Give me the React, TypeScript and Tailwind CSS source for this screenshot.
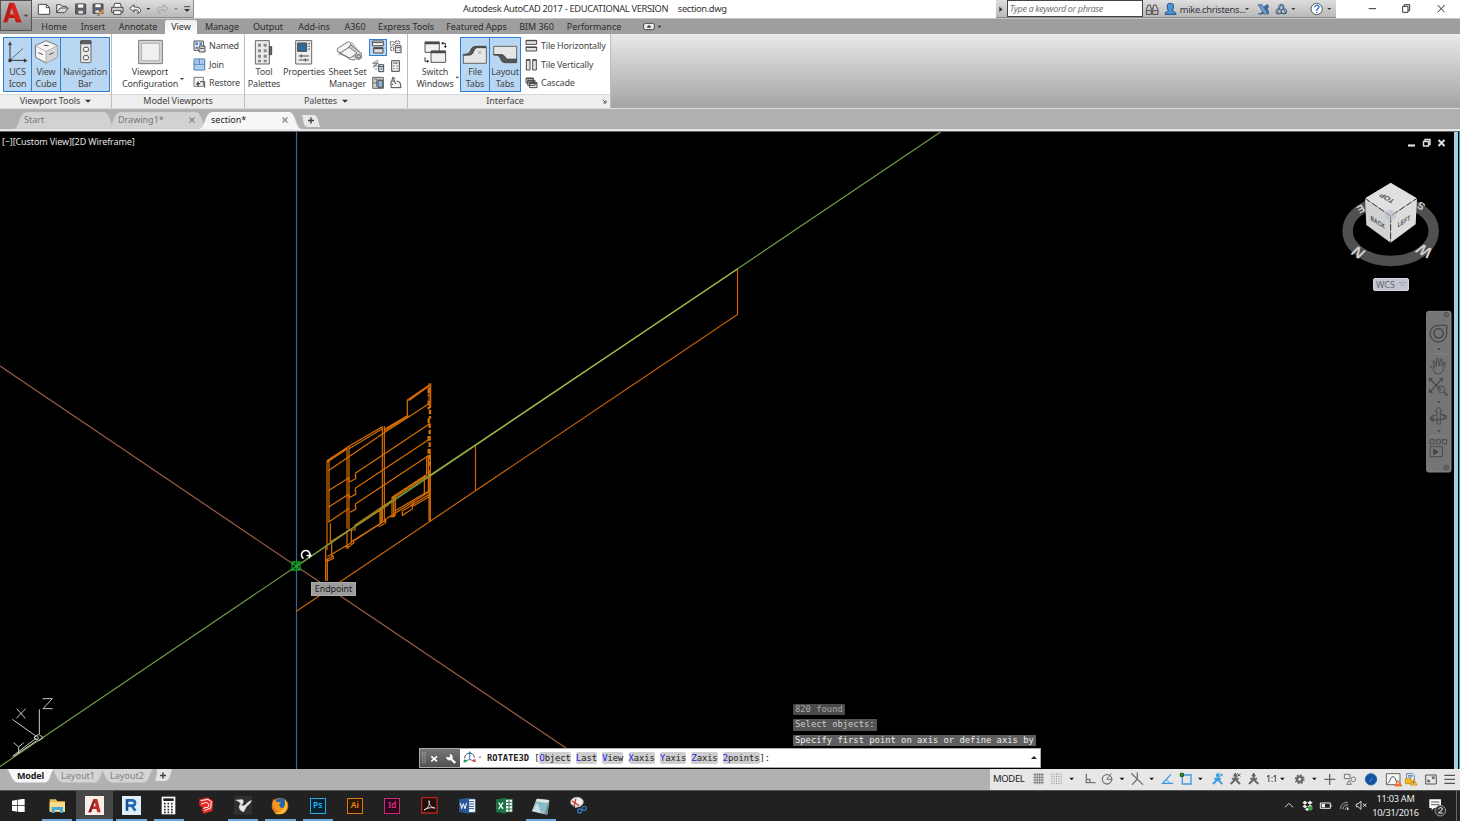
import React from 'react';

type GlyphProps = { box: string; children?: React.ReactNode; className?: string };

// Glyphs are drawn on a grid three times finer than the screen.
const Glyph: React.FC<GlyphProps> = ({ box, children, className = '' }) => {
  const [, , w, h] = box.split(' ').map(Number);
  return (
    <svg
      viewBox={box}
      width={w / 3}
      height={h / 3}
      className={`block shrink-0 ${className}`}
      fill="none"
      stroke="#4a4a4a"
      strokeWidth="3"
    >
      {children}
    </svg>
  );
};

const Caret: React.FC<{ box: string; x: number; y: number; r?: number; color?: string }> = ({ box, x, y, r = 6, color = '#333' }) => (
  <Glyph box={box}>
    <path d={`M${x - r} ${y - r / 2}h${r * 2}l${-r} ${r}z`} fill={color} stroke="none" />
  </Glyph>
);

const QuickAccess: React.FC = () => (
  <div className="flex h-[18px] w-[162px] border-b border-r border-[#8c8c8c] bg-linear-to-b from-[#dedede] to-[#b9b9b9]">
    <Glyph box="96 0 66 54">
      <path d="M115 13h24l10 10v20h-34z" fill="#fff" />
      <path d="M139 13v10h10" />
    </Glyph>
    <Glyph box="162 0 57 54">
      <path d="M170 38V14h12l4 5h12v6" fill="#eee" />
      <path d="M170 38l10-14h25l-11 14z" fill="#d8d8d8" />
    </Glyph>
    <Glyph box="219 0 48 54">
      <path d="M227 12h30v30h-30z" fill="#5c6470" />
      <path d="M233 12h18v12h-18z" fill="#fff" strokeWidth="2" />
      <path d="M234 31h16v11h-16z" fill="#ddd" strokeWidth="2" />
    </Glyph>
    <Glyph box="267 0 57 54">
      <path d="M279 12h30v28h-30z" fill="#5c6470" />
      <path d="M285 12h18v11h-18z" fill="#fff" strokeWidth="2" />
      <path d="M285 30h14v10h-14z" fill="#ddd" strokeWidth="2" />
      <path d="M297 44l14-14" stroke="#e79b3c" strokeWidth="6" />
      <path d="M293 48l5-6" />
    </Glyph>
    <Glyph box="324 0 57 54">
      <path d="M341 22l3-12h17l3 12" fill="#fff" />
      <path d="M335 22h34v15h-34z" fill="#ccc" />
      <path d="M341 32h22v11h-22z" fill="#fff" />
    </Glyph>
    <Glyph box="381 0 54 54">
      <path d="M389 25l13-11v7c13 0 20 4 20 10 0 5-4 8-10 9 3-3 4-5 3-7-2-3-6-4-13-4v7z" fill="#f4f4f4" />
    </Glyph>
    <Caret box="435 0 24 54" x={445} y={27} r={6} />
    <Glyph box="459 0 54 54">
      <path d="M504 25l-13-11v7c-13 0-20 4-20 10 0 5 4 8 10 9-3-3-4-5-3-7 2-3 6-4 13-4v7z" stroke="#a5a5a5" />
    </Glyph>
    <Caret box="513 0 30 54" x={528} y={27} r={6} color="#888" />
    <Glyph box="543 0 33 54">
      <path d="M552 20h18" />
      <path d="M552 27h18l-9 9z" fill="#333" stroke="none" />
    </Glyph>
  </div>
);

const TitleBar: React.FC = () => (
  <header className="relative flex h-[18px] bg-white pl-8">
    <div className="absolute left-0 top-0 z-10 h-[31px] w-8 border border-[#555] bg-linear-to-b from-[#b9b9b9] to-[#8a8a8a]">
      <svg viewBox="0 0 90 87" width="30" height="29">
        <path d="M7 64L25 5h15l22 59H45l-4-13H24l-4 13z" fill="#d8231f" />
        <path d="M32 20l6 20H27z" fill="#9f9f9f" />
        <path d="M25 5l8 10-16 49H7zM24 51l3-11 35 24H45l-4-13z" fill="#a91613" opacity="0.6" />
        <path d="M68 41h14l-7 7z" fill="#444" />
      </svg>
    </div>
    <QuickAccess />
    <div className="w-[269px]" />
    <div className="w-[215px] pt-[2px] text-[9.3px] leading-[13px] tracking-[-0.32px] text-[#333]">Autodesk AutoCAD 2017 - EDUCATIONAL VERSION</div>
    <div className="w-[318px] pt-[2px] text-[9.3px] leading-[13px] tracking-[-0.35px] text-[#333]">section.dwg</div>
    <div className="flex h-[18px] w-[340px] border-b border-[#8c8c8c] bg-linear-to-b from-[#dedede] to-[#b9b9b9]">
      <Glyph box="50 0 33 54">
        <path d="M60 20l10 8-10 8z" fill="#333" stroke="none" />
      </Glyph>
      <div className="h-[17px] w-[136px] border border-[#444] bg-white pl-[2px] text-[9px] italic leading-[15px] tracking-[-0.35px] text-[#777]">
        Type a keyword or phrase
      </div>
      <Glyph box="491 0 54 54">
        <path d="M501 43V29l5-14h7l3 14v14zM520 43V29l3-14h7l6 14v14zM516 25h5M501 32h14M521 32h14" />
      </Glyph>
      <Glyph box="545 0 54 54">
        <path d="M564 14c0-5 18-5 18 0v10c-1 5-4 8-4 8 4 2 11 3 12 11h-33c1-8 7-9 11-11 0 0-4-4-4-8z" fill="#4b95d6" stroke="#1c4f86" />
      </Glyph>
      <div className="w-[66px] pl-px pt-[3px] text-[9.3px] leading-[13px] tracking-[-0.3px] text-[#3b3040]">mike.christens...</div>
      <Caret box="797 0 27 54" x={803} y={27} r={6} />
      <Glyph box="824 0 54 54">
        <path d="M866 14c-12 2-13 8-14 14 0 7-5 12-15 14h11c7-1 10-4 12-8 2 4 3 7 7 8V32c-4-3-4-7 0-9z" fill="#3d6c9e" stroke="#30577f" strokeWidth="2" />
        <path d="M836 14h12l19 28h-12z" fill="#6f9fce" stroke="#30577f" strokeWidth="2" />
      </Glyph>
      <Glyph box="878 0 54 54">
        <circle cx="906" cy="21" r="8" fill="#ccd9e8" stroke="#42617f" />
        <circle cx="898" cy="34" r="8" stroke="#42617f" />
        <circle cx="914" cy="34" r="8" stroke="#42617f" />
        <path d="M906 14l14 26h-28z" stroke="#42617f" />
      </Glyph>
      <Caret box="932 0 51 54" x={942} y={27} r={6} />
      <Glyph box="983 0 54 54">
        <circle cx="1012" cy="27" r="17" fill="#fff" stroke="#555" />
        <path d="M1006 22c0-8 13-8 13-1 0 5-7 5-7 11M1012 35v4" stroke="#2877c9" strokeWidth="4" />
      </Glyph>
      <Caret box="1037 0 30 54" x={1050} y={27} r={6} />
    </div>
    <Glyph box="1067 0 373 54">
      <path d="M1165 26h22M1267 19h16v18h-16zM1272 19v-5h16v18h-5M1372 15l21 22M1393 15l-21 22" stroke="#333" />
    </Glyph>
  </header>
);

const menuTabs = [
  ['Home', 'w-[38px]'],
  ['Insert', 'w-[40px]'],
  ['Annotate', 'w-[50px]'],
  ['View', 'w-[32px] mx-[2px]'],
  ['Manage', 'w-[46px]'],
  ['Output', 'w-[46px]'],
  ['Add-ins', 'w-[46px]'],
  ['A360', 'w-[36px]'],
  ['Express Tools', 'w-[66px]'],
  ['Featured Apps', 'w-[75px]'],
  ['BIM 360', 'w-[45px]'],
  ['Performance', 'w-[70px]'],
];

const MenuTabs: React.FC = () => (
  <nav className="flex h-[16px] items-end border-t border-[#c4c4c4] bg-[#9e9e9e] pl-[35px] text-[9px] text-[#2c2c2c]">
    {menuTabs.map(([label, width]) => (
      <div
        key={label}
        className={`h-[14px] shrink-0 whitespace-nowrap text-center leading-[14px] ${width} ${
          label === 'View' ? 'rounded-t-[2px] bg-linear-to-b from-[#eee] to-white' : 'tracking-[-0.05px]'
        }`}
      >
        {label}
      </div>
    ))}
    <Glyph box="567 57 110 44">
      <rect x="611" y="70" width="32" height="19" rx="5" fill="#eee" />
      <path d="M622 82l5-6 5 6z" fill="#333" />
      <path d="M653 77h11l-5 6z" fill="#222" stroke="none" />
    </Glyph>
  </nav>
);

const BigButton: React.FC<{ lines: [string, string]; width: string; active?: boolean; children: React.ReactNode }> = ({ lines, width, active, children }) => (
  <button
    className={`flex h-[55px] shrink-0 flex-col items-center border text-[9px] leading-[11.5px] tracking-[-0.17px] text-[#454545] ${width} ${
      active ? 'border-[#2f80d0] bg-[#b9d6f2]' : 'border-transparent'
    }`}
  >
    <span className="flex h-[28px] items-center">{children}</span>
    <span className="whitespace-nowrap">{lines[0]}</span>
    <span className="whitespace-nowrap">{lines[1]}</span>
  </button>
);

const SmallRow: React.FC<{ label: string; children: React.ReactNode }> = ({ label, children }) => (
  <div className="flex h-[18.4px] items-center gap-[3px] whitespace-nowrap text-[9px] tracking-[-0.2px] text-[#454545]">
    {children}
    {label}
  </div>
);

const Panel: React.FC<{ title: string; width: string; caret?: boolean; launcher?: boolean; children: React.ReactNode }> = ({
  title,
  width,
  caret,
  launcher,
  children,
}) => (
  <section className={`flex h-[74px] shrink-0 flex-col border-r border-[#bdbdbd] bg-white ${width}`}>
    <div className="flex h-[60px] pt-[3px]">{children}</div>
    <div
      className={`relative flex h-[14px] items-center justify-center gap-[5px] border-t border-[#d9d9d9] bg-[#eeeeee] pb-px text-[9px] tracking-[-0.1px] text-[#444] ${
        launcher ? 'pr-[8px]' : ''
      }`}
    >
      {title}
      {caret && <Caret box="0 0 18 18" x={9} y={10} r={9} />}
      {launcher && (
        <svg viewBox="0 0 15 15" width="5" height="5" className="absolute right-[3px] top-[4px]" fill="none" stroke="#555" strokeWidth="3">
          <path d="M2 2l9 9M12 4v8H4" />
        </svg>
      )}
    </div>
  </section>
);

const Ribbon: React.FC = () => (
  <div className="flex h-[75px] border-b border-[#dcdcdc] bg-linear-to-b from-[#e9e9e9] to-[#a4a4a4]">
    <Panel title="Viewport Tools" width="w-[112px]" caret>
      <BigButton lines={['UCS', 'Icon']} width="ml-[3px] w-[29px]" active>
        <Glyph box="18 114 69 81">
          <path d="M30 125v53h46" stroke="#333" />
          <path d="M30 178l39-36" stroke="#333" strokeWidth="2" />
          <path d="M25 132l5-10 5 10zM72 173l10 6-10 5zM26 174h8v9h-8z" fill="#333" strokeWidth="1" />
        </Glyph>
      </BigButton>
      <BigButton lines={['View', 'Cube']} width="w-[30px] -ml-px" active>
        <Glyph box="102 116 75 76">
          <path d="M106 136l32-15 35 15-2 35-33 17-31-17z" fill="#f5f5f5" stroke="#777" />
          <path d="M138 153v35l33-17 2-35z" fill="#d5d5d5" stroke="none" />
          <path d="M106 136l32 17 35-17M138 153v35" stroke="#999" strokeWidth="2" />
          <path d="M115 157l14 6M147 163l14-6M132 135l14 1" stroke="#555" />
        </Glyph>
      </BigButton>
      <BigButton lines={['Navigation', 'Bar']} width="w-[50px] -ml-px" active>
        <Glyph box="225 116 57 76">
          <rect x="239" y="121" width="31" height="66" rx="2" fill="#e6e6e6" stroke="#666" />
          <path d="M239 122h31v8h-31z" fill="#666" />
          <rect x="248" y="141" width="14" height="12" rx="3" fill="#fff" />
          <rect x="248" y="166" width="14" height="12" rx="3" fill="#fff" />
        </Glyph>
      </BigButton>
    </Panel>

    <Panel title="Model Viewports" width="w-[133px]">
      <BigButton lines={['Viewport', 'Configuration']} width="w-[60px] ml-[8px]">
        <Glyph box="411 114 75 80">
          <path d="M413 118h71v70h-71z" fill="#d5d5d5" stroke="#777" />
          <path d="M422 127h53v52h-53z" fill="#f1f1f1" stroke="#999" strokeWidth="2" />
        </Glyph>
      </BigButton>
      <Caret box="540 111 21 250" x={546} y={237} r={6} />
      <div className="ml-[6px]">
        <SmallRow label="Named">
          <Glyph box="579 120 39 40">
            <path d="M582 123h28v28h-28z" fill="#fff" />
            <path d="M586 127h8v9h-8zM598 127h8v9h-8zM586 140h8v7h-8z" fill="#4d88c8" stroke="none" />
            <path d="M597 138h18v18h-18z" fill="#ddd" />
            <path d="M600 145h12" />
          </Glyph>
        </SmallRow>
        <SmallRow label="Join">
          <Glyph box="579 174 39 40">
            <path d="M582 177h32v33h-32z" fill="#bcd7f1" stroke="#417ab4" />
            <path d="M582 193h32M598 177v14" stroke="#417ab4" />
            <path d="M588 184h20v17h-20z" stroke="#76a5d1" strokeDasharray="4 3" />
          </Glyph>
        </SmallRow>
        <SmallRow label="Restore">
          <Glyph box="579 229 39 40">
            <path d="M582 233h28v27h-28z" fill="#f4f4f4" stroke="#777" />
            <path d="M588 253l8 8v-7h5v-4h-5v-7z" fill="#444" stroke="none" />
            <path d="M600 246h14v18" />
          </Glyph>
        </SmallRow>
      </div>
    </Panel>

    <Panel title="Palettes" width="w-[163px]" caret>
      <BigButton lines={['Tool', 'Palettes']} width="w-[36px] ml-[1px]">
        <Glyph box="762 114 60 80">
          <path d="M766 119h42v70h-42z" fill="#eaeaea" stroke="#666" />
          <path d="M808 137h7v24h-7z" fill="#666" />
          <path d="M774 128h9v9h-9zM791 128h9v9h-9zM774 145h9v9h-9zM791 145h9v9h-9zM774 161h9v9h-9zM791 161h9v9h-9zM774 176h9v8h-9zM791 176h9v8h-9z" fill="#888" stroke="none" />
        </Glyph>
      </BigButton>
      <BigButton lines={['Properties', '']} width="w-[44px]">
        <Glyph box="879 114 66 80">
          <path d="M887 119h48v70h-48z" fill="#eee" stroke="#666" />
          <path d="M893 126h27v25h-27z" fill="#356799" />
          <path d="M925 128h5M925 136h5M925 144h5M896 165h31M896 177h31M904 160v10M916 172v10" />
        </Glyph>
      </BigButton>
      <BigButton lines={['Sheet Set', 'Manager']} width="w-[43px]">
        <Glyph box="70 114 84 80">
          <path d="M80 161l34-34c4-5 12-5 16 1l22 32c3 8-2 15-9 15z" fill="#cfcfcf" stroke="none" />
          <path d="M80 151l36 22c4 3 9 4 18 3" stroke="#666" />
          <path d="M80 143l29-19c6-4 13 1 10 7l-4 8 24 17-21 16-38-21z" fill="#f4f4f4" stroke="#777" />
          <path d="M115 139l-28 18M119 131l31 24c7 8 3 20-6 20-8 1-13-7-9-14" stroke="#666" />
          <circle cx="144" cy="166" r="5" fill="#eee" />
        </Glyph>
      </BigButton>
      <div className="grid h-[55px] w-[36px] grid-cols-2 place-items-center">
        <div className="flex h-[17px] w-[18px] items-center justify-center border border-[#2f80d0] bg-[#b9d6f2]">
          <Glyph box="183 119 42 42">
            <path d="M187 122h33v14h-33zM189 127h29" fill="#fff" />
            <path d="M191 142h28v16h-28z" fill="#ddd" />
            <path d="M191 144h28" strokeWidth="5" />
          </Glyph>
        </div>
        <Glyph box="238 119 42 42">
          <path d="M242 124h11v10h-11zM258 122h12v8h-12zM243 140h9v10h-9z" strokeDasharray="4 2" />
          <path d="M257 136h17v21h-17z" fill="#eee" />
          <path d="M260 142h12M261 150h2M268 150h2" />
        </Glyph>
        <Glyph box="183 173 42 42">
          <path d="M204 176l-16 10h18M204 181l-14 13h14M194 203h8M190 199l12-12" strokeWidth="2" />
          <path d="M206 190h15v21h-15z" fill="#cfe1f3" />
          <path d="M206 196h15M211 203h6" />
        </Glyph>
        <Glyph box="238 173 42 42">
          <path d="M246 178h23v32h-23z" fill="#eee" />
          <path d="M251 185h13M251 194h3M261 194h3M251 202h3M261 202h3" />
        </Glyph>
        <Glyph box="183 228 42 42">
          <path d="M188 232h32v33h-32z" fill="#ccc" stroke="#666" />
          <path d="M192 237h8v24M206 237v24M212 237v24M188 249h15" strokeWidth="2" />
          <path d="M204 241h14v21h-14z" fill="#8bb7dd" />
        </Glyph>
        <Glyph box="238 228 42 42">
          <path d="M244 243v20h30l-3-16-10-4M244 243h10" fill="#f4f4f4" />
          <path d="M258 252l-7-16M247 241l2-9 8 4" />
          <path d="M246 253h4" />
        </Glyph>
      </div>
    </Panel>

    <Panel title="Interface" width="w-[203px]" launcher>
      <BigButton lines={['Switch', 'Windows']} width="w-[42px] ml-[6px]">
        <Glyph box="333 114 81 80">
          <path d="M342 123h43v31h-43zM360 150h44v34h-44z" fill="#f1f1f1" stroke="#555" />
          <path d="M342 126h43M360 153h44" strokeWidth="7" />
          <path d="M393 127h10v10M342 169v12h9" stroke="#333" />
          <path d="M390 127l7-5v10zM398 135h10l-5 7zM355 181l-7-5v10z" fill="#333" stroke="none" />
        </Glyph>
      </BigButton>
      <Caret box="435 111 9 250" x={439} y={233} r={5} />
      <BigButton lines={['File', 'Tabs']} width="w-[30px] ml-px" active>
        <Glyph box="453 114 84 80">
          <path d="M460 187v-24l21-2 14-22h34v48z" fill="#e6e6e6" stroke="#666" />
          <path d="M460 160c12 0 18-2 23-14 4-9 8-10 21-10h24v4h-27c-12 3-8 21-22 22h-19z" fill="#555" />
          <path d="M504 149l10 10M514 149l-10 10" stroke="#888" strokeWidth="2" />
        </Glyph>
      </BigButton>
      <BigButton lines={['Layout', 'Tabs']} width="w-[32px] -ml-px" active>
        <Glyph box="543 114 84 80">
          <path d="M551 136h69v39h-28l-14-13-27-2z" fill="#e6e6e6" stroke="#666" />
          <path d="M551 162c12 0 16 1 21 12 4 9 6 11 16 11h32v-10h-27c-7 0-7-14-18-14h-24z" fill="#555" />
        </Glyph>
      </BigButton>
      <div className="ml-[4px]">
        <SmallRow label="Tile Horizontally">
          <Glyph box="643 119 39 42">
            <path d="M646 123h32v12h-32zM646 143h32v12h-32z" fill="#e5e5e5" />
            <path d="M646 124h32M646 144h32" strokeWidth="4" />
          </Glyph>
        </SmallRow>
        <SmallRow label="Tile Vertically">
          <Glyph box="643 173 39 42">
            <path d="M647 178h11v31h-11zM666 178h11v31h-11z" fill="#e5e5e5" />
            <path d="M647 179h11M666 179h11" strokeWidth="4" />
          </Glyph>
        </SmallRow>
        <SmallRow label="Cascade">
          <Glyph box="643 228 39 42">
            <path d="M646 234h22v15h-22zM651 241h22v15h-22zM657 248h22v15h-22z" fill="#e5e5e5" />
            <path d="M646 236h22M651 243h22M657 250h22" strokeWidth="4" />
          </Glyph>
        </SmallRow>
      </div>
    </Panel>
  </div>
);

const FileTab: React.FC<{ label: string; w: number; className: string; active?: boolean; close?: boolean }> = ({ label, w, className, active, close }) => (
  <div className={`relative h-[17px] shrink-0 ${className}`}>
    <svg className="absolute inset-0" width={w} height="17" viewBox={`0 0 ${w} 17`}>
      <path
        d={`M0 17C6 16 4 1 13 0H${w - 12}C${w - 5} 1 ${w - 6} 16 ${w} 17z`}
        fill={active ? '#f6f6f6' : '#d2d2d2'}
        stroke={active ? '#ffffff' : '#c3c3c3'}
        strokeWidth="0.5"
      />
    </svg>
    <div className={`relative flex h-[17px] items-center justify-between pb-px pr-[13px] text-[9px] ${active ? 'text-[#222]' : 'text-[#777]'}`}>
      {label}
      {close && (
        <svg width="6" height="6" viewBox="0 0 6 6" stroke="#888" strokeWidth="1.3">
          <path d="M.5.5l5 5M5.500.5l-5 5" />
        </svg>
      )}
    </div>
  </div>
);

const FileTabs: React.FC = () => (
  <div className="flex h-[22px] items-end border-b-2 border-[#e6e6e6] bg-[#b0b0b0] pl-[14px]">
    <FileTab label="Start" w={102} className="w-[102px] pl-[10px]" />
    <FileTab label="Drawing1*" w={100} className="-ml-[8px] w-[100px] pl-[10px]" close />
    <FileTab label="section*" w={101} className="-ml-[8px] w-[101px] pl-[11px]" active close />
    <svg width="20" height="17" viewBox="0 0 20 17">
      <path d="M1 3H13C18 3 17 14 20 15H7C1 14 3 8 1 3z" fill="#e8e8e8" />
      <path d="M7 8.500h6M10 5.500v6" stroke="#444" strokeWidth="1.5" />
    </svg>
  </div>
);

const Section: React.FC = () => (
  <g transform="translate(280 370) scale(.33333)" stroke="#d86f02" strokeWidth="3.6">
    <path d="M141 272v268M147 270v186M141 272l61-40M141 277l61-41M201 232v245M207 230v250M201 232l106-62M207 236l100-60M307 170v285M313 168v285M313 178l69-41M382 141V90l66-45M386 92l64-46M386 137l-73 46" />
    <path d="M447 40v58M452 40v60" />
    <path d="M446 55v22M446 92v26M450 100v46M446 145v18M446 198v20M446 237v22M449 160v130" strokeWidth="7" strokeDasharray="14 5" />
    <path d="M145 302l162-110L449 100M145 362l62-39M145 412l62-40M145 457l62-42" />
    <path d="M226 310l222-148M226 355l222-147M226 402l219-145M226 310v10M226 355v10M226 402v10M210 335l17-9v-12M210 382l17-9v-12M210 427l17-9v-12M207 322v14M207 372v14" />
    <path d="M137 528l67-45M151 516l55-35M137 530v103M142 565v68M151 460v60M155 515v45M137 572l23-15M142 560l72-42M160 557v8l-20 10" />
    <path d="M201 480v50M214 480v40M197 530h10l14-11v-6l84-55M197 534h10M214 515l83-52M210 480h15v-15l112-75M225 470l100-66M300 418v45M304 416v45M297 463l20-12v7l-16 10h-8M313 450l137-86" />
    <path d="M336 382v58M341 380v60M346 378v58M336 382l104-68M336 387l104-68M330 440h12l4-5M433 325v50M445 255v108M451 250v203M447 300v153M440 258v55M346 422l105-62M400 408l51-30M390 408l60-36M367 423l30-18v12l-30 19zM400 395v13" />
    <path d="M346 377l95-63" strokeWidth="6" strokeDasharray="4 4" />
  </g>
);

const ViewCube: React.FC = () => (
  <g transform="translate(1320 130) scale(.33333)">
    <defs>
      <radialGradient id="cubeShadow">
        <stop offset="0.5" stopColor="#000" />
        <stop offset="1" stopColor="#000" stopOpacity="0" />
      </radialGradient>
    </defs>
    <ellipse cx="212" cy="303" rx="129" ry="90" stroke="#505050" strokeWidth="31" />
    <ellipse cx="212" cy="300" rx="100" ry="80" fill="url(#cubeShadow)" />
    <g fill="#d0d0d0" fontFamily="Liberation Sans, sans-serif" fontWeight="700" textAnchor="middle">
      <text transform="translate(103 379) rotate(32) skewX(-12)" fontSize="46">N</text>
      <text transform="translate(323 350) rotate(-152) skewX(-10)" fontSize="46">W</text>
      <text transform="translate(114 222) rotate(150)" fontSize="32" y="-6">E</text>
      <text transform="translate(308 220) rotate(-150)" fontSize="32" y="2">S</text>
    </g>
    <path d="M212 158l79 47-79 53-77-53z" fill="#e0e0e0" />
    <path d="M135 205l77 53v80l-73-53z" fill="#d2d2d2" />
    <path d="M291 205l-79 53v80l75-55z" fill="#dcdcdc" />
    <path d="M135 205l77 53 79-53M212 258v80" stroke="#333" strokeWidth="3" strokeDasharray="19 6" />
    <path d="M196 247l16-9 16 9v17l-16 9-16-9z" fill="#b9bfce" opacity=".65" />
    <g fill="#505050" fontFamily="Liberation Sans, sans-serif" fontWeight="700" textAnchor="middle">
      <text transform="matrix(-.83 -.5 .7 -.6 206 200)" fontSize="23">TOP</text>
      <text transform="matrix(.78 .5 0 1.1 173 284)" fontSize="19">BACK</text>
      <text transform="matrix(.78 -.5 0 1.1 252 281)" fontSize="19">LEFT</text>
    </g>
  </g>
);

const NavigationBar: React.FC = () => (
  <g transform="translate(1400 300) scale(.33333)" stroke="#4a4a4a" strokeWidth="3">
    <rect x="80" y="34" width="73" height="482" rx="6" fill="#757575" stroke="#858585" />
    <circle cx="139" cy="44" r="7" />
    <path d="M136 41l6 6M142 41l-6 6" />
    <path d="M116 76h24v26a25 25 0 1 1-24-26z" strokeWidth="4" />
    <circle cx="116" cy="100" r="14" strokeWidth="5" />
    <path d="M111 145h12l-6 6zM111 304h12l-6 6zM111 391h12l-6 6z" fill="#444" stroke="none" />
    <path d="M88 161h57M88 408h57" stroke="#8a8a8a" strokeWidth="2" />
    <path d="M106 221c-3-10-10-15-15-21 4-4 8 1 13 5l-5-22c5-3 7 3 10 16l1-24c6-3 7 3 7 23l6-21c6-1 4 8 2 23l9-15c5 1 1 10-3 20-3 9-6 11-8 16z" />
    <path d="M92 239l31 31M124 238l-32 36" strokeWidth="4" />
    <path d="M88 235h9l-9 9zM128 235h-9l9 9zM88 277v-9l9 9z" fill="#444" />
    <circle cx="124" cy="268" r="10" />
    <path d="M132 276l10 11" strokeWidth="5" />
    <path d="M111 372v-39h-6l11-11 11 11h-6v39z" />
    <path d="M107 346c-22 3-22 14 5 14M123 343c23 3 21 16-10 16M101 353l-8 6 8 6M129 348h10" strokeWidth="4" />
    <path d="M90 419h12v13H90zM109 419h12v13h-12zM128 419h12v13h-12zM90 440h37v30H90z" />
    <path d="M101 447v17l14-8z" fill="#444" />
    <circle cx="139" cy="503" r="7" />
    <path d="M135 503h8" />
  </g>
);

const Canvas: React.FC = () => (
  <main className="relative flex h-[638px] overflow-hidden border-t border-[#666] bg-black">
    <svg width="1454" height="637" viewBox="0 132 1454 637" fill="none" className="block shrink-0">
      <path d="M296.500 131V769" stroke="#3c6396" strokeWidth="1.2" />
      <path d="M0 366L296 566L566 748" stroke="#9a5c45" strokeWidth="1.2" />
      <path d="M0 766.500L296 566.500L942 131" stroke="#6d9c3f" strokeWidth="1.2" />
      <path d="M296 611.500L737.500 314.500V269M475.500 445V491" stroke="#c96408" strokeWidth="1.2" />
      <Section />
      <path d="M296 566.500L429 476" stroke="#6d9c3f" strokeWidth="1.2" />
      <path d="M429 476L737.500 269" stroke="#a5b643" strokeWidth="1.2" />
      <path d="M292 562h8v8h-8zM292 562l8 8M300 562l-8 8" stroke="#00a91c" strokeWidth="1.3" />
      <path d="M303.500 558.500a4.300 4.300 0 1 1 5.200-.5M306.500 555.500h5" stroke="#fff" strokeWidth="1.6" />
      <g transform="translate(0 690) scale(.33333)" stroke="#c9c9c9" strokeWidth="3">
        <path d="M118 58v75M106 137L37 88M104 148L37 199M110 152l-69 47M128 26h29l-28 30h29M50 56l26 29M77 56L49 85M41 158l15 13 15-13M56 171v20M103 142l13-9 14 10-14 9z" />
        <circle cx="109" cy="143" r="6" />
      </g>
      <path d="M1408 145.500h7" stroke="#ddd" strokeWidth="2.200" />
      <path d="M1423.500 141.500h5v4.500h-5zM1425 141v-1.500h5v5h-1.500" stroke="#ddd" strokeWidth="1.4" />
      <path d="M1438.500 140l6 6M1444.500 140l-6 6" stroke="#ddd" strokeWidth="2" />
      <ViewCube />
      <NavigationBar />
    </svg>
    <div className="w-[4px] shrink-0 bg-[#aecbe4]" />
    <div className="ml-px w-px shrink-0 bg-[#19b3cf]" />

    <div className="absolute left-[2px] top-[3px] text-[9px] leading-[13px] tracking-[-0.12px] text-[#e2e2e2]">[−][Custom View][2D Wireframe]</div>
    <div className="absolute left-[1373px] top-[146px] flex h-[13px] w-[36px] items-center gap-[4px] rounded-[2px] border border-[#d5d8e2] bg-[#c2c5d0] pl-[2px] text-[9px] text-[#666]">
      WCS
      <svg width="7" height="5" viewBox="0 0 7 5" fill="none" stroke="#a2a6b2">
        <path d="M.5.5h6L3.500 4z" />
      </svg>
    </div>
    <div className="absolute left-[311px] top-[450px] h-[14px] w-[45px] border border-[#aaa] bg-[#9c9c9c] text-center text-[9px] leading-[12px] tracking-[-0.1px] text-[#222]">Endpoint</div>
    <CommandLine />
  </main>
);

const options = ['Object', 'Last', 'View', 'Xaxis', 'Yaxis', 'Zaxis', '2points'];

const CommandLine: React.FC = () => (
  <div className="absolute bottom-[1px] left-[419px] w-[622px] font-['DejaVu_Sans_Mono','Liberation_Mono',monospace] text-[8.82px]">
    <div className="flex flex-col items-start gap-[4px] pb-[2px] pl-[374px] leading-[11.300px] text-[#ddd]">
      <div className="rounded-[1px] bg-[#4a4a4a] px-[2px] text-[#aaa]">820 found</div>
      <div className="rounded-[1px] bg-[#545454] px-[2px] text-[#ccc]">Select objects:</div>
      <div className="whitespace-nowrap rounded-[1px] bg-[#5f5f5f] px-[2px] text-[#eee]">Specify first point on axis or define axis by</div>
    </div>
    <div className="flex h-[20px] items-center border border-[#aaa] bg-white text-[#222]">
      <Glyph box="330 25 120 56" className="bg-linear-to-b from-[#777] to-[#505050]">
        <path d="M338 35v36M345 35v36" stroke="#aaa" strokeDasharray="3 3" strokeWidth="4" />
        <path d="M364 47l17 15M381 47l-17 15" stroke="#fff" strokeWidth="5" />
        <path d="M418 50l18 17" stroke="#fff" strokeWidth="7" />
        <path d="M410 50c0 7 8 10 14 6 5-5 3-13-3-15l1 9-5 2z" fill="#fff" stroke="#fff" />
      </Glyph>
      <Glyph box="450 27 75 54">
        <path d="M479 38v20l-13 6M479 58l14 6" stroke="#367db5" />
        <path d="M464 55c0-20 29-20 29-2" stroke="#444" />
        <path d="M474 42l5-9 5 9z" fill="#2b79b9" stroke="none" />
        <path d="M461 59h8v8h-8z" fill="#289b49" stroke="none" />
        <path d="M489 58h8v8h-8z" fill="#e04739" stroke="none" />
        <path d="M505 50h10l-5 5z" fill="#777" stroke="none" />
      </Glyph>
      <div className="ml-[2px] flex-1 whitespace-pre leading-[12px] tracking-[-0.07px]">
        <b>ROTATE3D</b> [
        {options.map((option, i) => (
          <React.Fragment key={option}>
            {i > 0 && ' '}
            <span className="rounded-[2px] bg-[#cfcfcf] py-px">
              <span className="text-[#2222e8]">{option[0]}</span>
              {option.slice(1)}
            </span>
          </React.Fragment>
        ))}
        ]:
      </div>
      <svg width="12" height="6" viewBox="0 0 12 6">
        <path d="M3 4l3-3 3 3z" fill="#222" />
      </svg>
    </div>
  </div>
);

const LayoutTab: React.FC<{ label: string; w: number; className: string; active?: boolean }> = ({ label, w, className, active }) => (
  <div className={`relative h-[14px] shrink-0 text-center text-[9px] leading-[13px] ${className} ${active ? 'font-bold tracking-[-0.2px] text-[#222]' : 'text-[#808080]'}`}>
    <svg className="absolute inset-0" width={w} height="14" viewBox={`0 0 ${w} 14`}>
      <path d={`M0 0H${w}C${w - 4} 3 ${w - 3} 13 ${w - 9} 13.500H11C4 13 4 3 0 0z`} fill={active ? '#f7f7f7' : '#d4d4d4'} />
    </svg>
    <span className="relative">{label}</span>
  </div>
);

const Runner: React.FC<{ box: string; x: number; color: string; spark?: boolean }> = ({ box, x, color, spark }) => (
  <Glyph box={box}>
    <path d={`M${x} 42v16l-14 14M${x} 58l14 14M${x - 10} 55l10 4 10-4`} stroke={color} strokeWidth="6" />
    <path d={`M${x - 5} 48l5-9 5 9z`} fill={color} stroke={color} />
    {spark && <path d={`M${x + 5} 39l10 10M${x + 3} 51l13-9`} stroke={color} />}
  </Glyph>
);

const StatusBar: React.FC = () => (
  <div className="flex h-[21px] bg-[#b1b1b1]">
    <div className="flex w-[990px] pl-[7px]">
      <LayoutTab label="Model" w={47} className="w-[47px]" active />
      <LayoutTab label="Layout1" w={52} className="-ml-[2px] w-[52px]" />
      <LayoutTab label="Layout2" w={52} className="-ml-[3px] w-[52px]" />
      <svg width="20" height="14" viewBox="0 0 20 14">
        <path d="M4 0h15c-2 4-1 12-8 12H3C1 10 5 6 4 0z" fill="#e4e4e4" />
        <path d="M7 6.500h6M10 3.500v6" stroke="#444" strokeWidth="1.500" />
      </svg>
    </div>
    <div className="flex h-[21px] w-[470px] bg-[#e7e7e7]">
      <div className="w-[40px] pl-[3px] text-[9.500px] leading-[20px] tracking-[-0.35px] text-[#222]">MODEL</div>
      <Glyph box="150 27 51 63">
        <path d="M165 39v34M172 39v34M179 39v34M186 39v34M160 44h32M160 52h32M160 60h32M160 68h32" stroke="#777" strokeWidth="2.500" />
      </Glyph>
      <Glyph box="201 27 57 63">
        <path d="M214 42h32M214 49h32M214 56h32M214 63h32M214 70h32" stroke="#888" strokeDasharray="3 4" />
      </Glyph>
      <Caret box="258 27 42 63" x={275} y={57} r={7} color="#111" />
      <Glyph box="300 27 54 63">
        <path d="M319 41v27h28M319 58h11v10" stroke="#777" strokeWidth="4" />
      </Glyph>
      <Glyph box="354 27 54 63">
        <circle cx="381" cy="58" r="14" stroke="#777" strokeWidth="4" />
        <path d="M398 58h-18l14-18" stroke="#777" />
      </Glyph>
      <Caret box="408 27 36 63" x={426} y={57} r={7} color="#111" />
      <Glyph box="444 27 54 63">
        <path d="M454 40l35 34M472 37v21l-16 16" stroke="#777" strokeWidth="4" />
      </Glyph>
      <Caret box="498 27 33 63" x={515} y={57} r={7} color="#111" />
      <Glyph box="531 27 63 63">
        <path d="M573 43l-25 27h32" stroke="#3b9be0" strokeWidth="4" />
        <path d="M559 61c7 0 8 6 8 9" stroke="#3b9be0" />
      </Glyph>
      <Glyph box="594 27 51 63">
        <path d="M607 45h26v27h-26z" stroke="#3b9be0" strokeWidth="4" />
        <path d="M601 40h9v9h-9z" fill="#22b322" stroke="#174317" />
      </Glyph>
      <Caret box="645 27 33 63" x={661} y={57} r={7} color="#111" />
      <Runner box="678 27 60 63" x={713} color="#3b9be0" spark />
      <Runner box="738 27 54 63" x={766} color="#666" spark />
      <Runner box="792 27 60 63" x={821} color="#666" />
      <div className="w-[15px] pl-[2px] text-[9px] leading-[20px] tracking-[-0.5px] text-[#222]">1:1</div>
      <Caret box="897 27 33 63" x={907} y={57} r={7} color="#111" />
      <Glyph box="930 27 57 63">
        <circle cx="959" cy="58" r="8" stroke="#666" strokeWidth="7" />
        <circle cx="959" cy="58" r="13" stroke="#666" strokeWidth="4" strokeDasharray="5 5.200" />
      </Glyph>
      <Caret box="987 27 33 63" x={1003} y={57} r={7} color="#111" />
      <Glyph box="1020 27 60 63">
        <path d="M1033 58h33M1049 42v33" stroke="#666" strokeWidth="4" />
      </Glyph>
      <Glyph box="1080 27 60 63">
        <path d="M1093 43h17v13h-17zM1100 73l7-12 7 12z" stroke="#777" />
        <circle cx="1120" cy="58" r="7" stroke="#777" />
      </Glyph>
      <Glyph box="1140 27 63 63">
        <circle cx="1173" cy="58" r="17" fill="#10549f" stroke="#28679d" />
        <path d="M1168 65l10-10" stroke="#3978b5" strokeWidth="4" />
      </Glyph>
      <Glyph box="1203 27 63 63">
        <path d="M1219 41h41v33h-41z" fill="#f6f6f6" stroke="#666" />
        <path d="M1222 70c8 0 8-20 17-20s8 20 17 20" stroke="#555" />
        <path d="M1254 61l12 17h-22z" fill="#e8773a" stroke="#e8773a" />
        <path d="M1254 66v6" stroke="#fff" />
      </Glyph>
      <Glyph box="1266 27 54 63">
        <path d="M1280 41h17l6 6v22h-23z" fill="#fff" stroke="#4a78ad" />
        <path d="M1284 47h14M1284 51h14" stroke="#4a78ad" />
        <path d="M1276 56h18v15h-18z" fill="#f1ba28" stroke="#d19a20" />
        <path d="M1301 58l10 17h-20z" fill="#ffd33a" stroke="#cc9722" />
        <path d="M1301 64v7" />
      </Glyph>
      <Glyph box="1320 27 63 63">
        <path d="M1337 45h32v27h-32z" stroke="#555" />
        <path d="M1343 66v-8l8 8zM1363 50v8l-8-8z" fill="#555" stroke="#555" strokeWidth="1" />
        <path d="M1343 66l7-7M1363 50l-7 7" stroke="#555" />
      </Glyph>
      <Glyph box="1383 27 57 63">
        <path d="M1393 46h32M1393 58h32M1393 70h32" stroke="#555" strokeWidth="4" />
      </Glyph>
    </div>
  </div>
);

const TaskItem: React.FC<{ open?: boolean; active?: boolean; children: React.ReactNode }> = ({ open, active, children }) => (
  <div className={`relative flex h-[30px] w-[37.25px] shrink-0 items-center justify-center pb-px ${active ? 'bg-[#474747]' : ''}`}>
    {children}
    {open && <span className={`absolute bottom-0 h-[2px] bg-[#6fa9dc] ${active ? 'inset-x-0' : 'inset-x-[3.500px]'}`} />}
  </div>
);

const AdobeIcon: React.FC<{ label: string; className: string }> = ({ label, className }) => (
  <div className={`flex h-[16px] w-[16px] items-center justify-center border-[1.500px] text-[8.500px] font-semibold ${className}`}>{label}</div>
);

const Taskbar: React.FC = () => (
  <footer className="flex h-[31px] border-t border-[#555] bg-[#212121] pl-px">
    <TaskItem>
      <Glyph box="36 328 39 40" className="-ml-[2px]">
        <path d="M36 333l16-3v17H36zM54 330l20-3v20H54zM36 349h16v17l-16-3zM54 349h20v20l-20-3z" fill="#fff" stroke="none" />
      </Glyph>
    </TaskItem>
    <TaskItem open>
      <Glyph box="146 324 50 46">
        <path d="M148 328h19l4 6h23v31h-46z" fill="#e8bf55" stroke="none" />
        <path d="M148 337h46v28h-46z" fill="#fbdf88" stroke="none" />
        <path d="M154 369v-18h34v18h-9v-9h-16v9z" fill="#46a8df" stroke="none" />
      </Glyph>
    </TaskItem>
    <TaskItem open active>
      <Glyph box="254 318 57 57">
        <path d="M254 318h57v57h-57z" fill="#f8eee7" stroke="none" />
        <path d="M264 367l16-40h11l10 40h-10l-3-10h-12l-3 10z" fill="#c52b26" stroke="none" />
        <path d="M283 335l3 14h-8z" fill="#f8eee7" stroke="none" />
        <path d="M264 367l16-40 4 8-12 32z" fill="#842020" stroke="none" />
      </Glyph>
    </TaskItem>
    <TaskItem open>
      <Glyph box="367 318 57 57">
        <path d="M367 318h57v57h-57z" fill="#dfedf7" stroke="none" />
        <path d="M382 362v-31h15c12 0 12 16 0 16h-14M396 347l11 15" stroke="#2268ad" strokeWidth="8" />
        <path d="M382 362v-31" stroke="#184881" strokeWidth="5" />
      </Glyph>
    </TaskItem>
    <TaskItem open>
      <Glyph box="484 319 45 56">
        <path d="M486 321h41v53h-41z" fill="#fff" stroke="none" />
        <path d="M491 326h31v8h-31z" fill="#222" stroke="none" />
        <path d="M493 342h28M493 351h28M493 360h28M493 368h28" stroke="#333" strokeWidth="5" strokeDasharray="5 5.500" />
      </Glyph>
    </TaskItem>
    <TaskItem>
      <Glyph box="594 321 50 50">
        <path d="M598 328l25-6 17 11-3 30-26 8-7-13 6-4-12-7z" fill="#e52b26" stroke="none" />
        <path d="M602 332l22-4 10 7-2 19-19 8M604 342l15-5 8 6-2 8-16 4" stroke="#fff" strokeWidth="3" />
      </Glyph>
    </TaskItem>
    <TaskItem open>
      <Glyph box="702 320 56 56">
        <path d="M702 320h56v56h-56z" fill="#303030" stroke="none" />
        <path d="M706 332l20-2c6 2 6 8 2 14l-3 4c4 2 9 0 13-4 6-6 11-9 18-11-4 9-9 13-15 18-4 4-6 13-10 17-7-2-12-6-14-13-1-4 1-8 5-12l-6-6z" fill="#e8e8e8" stroke="#888" strokeWidth="1" />
      </Glyph>
    </TaskItem>
    <TaskItem open>
      <Glyph box="814 320 54 54">
        <circle cx="841" cy="347" r="25" fill="#e97817" stroke="none" />
        <circle cx="843" cy="341" r="18" fill="#2762ad" stroke="none" />
        <path d="M820 326l12 9 12 1-6 8 5 8 17 1-9 10c-22 6-35-13-31-37z" fill="#f59721" stroke="none" />
        <path d="M855 327c12 11 9 30 0 38-8 8-23 9-31 2 18 2 37-13 31-40z" fill="#f8bf31" stroke="none" />
      </Glyph>
    </TaskItem>
    <TaskItem open>
      <AdobeIcon label="Ps" className="border-[#26a9df] bg-[#052231] text-[#26b3ed]" />
    </TaskItem>
    <TaskItem>
      <AdobeIcon label="Ai" className="border-[#d87b16] bg-[#2b1602] text-[#ef8a19]" />
    </TaskItem>
    <TaskItem>
      <AdobeIcon label="Id" className="border-[#c72c77] bg-[#2c0719] text-[#df3485]" />
    </TaskItem>
    <TaskItem>
      <Glyph box="333 169 51 51">
        <path d="M335 171h46v46h-46z" fill="#240d0b" stroke="#b22620" strokeWidth="4" />
        <path d="M342 208c15-7 18-19 15-28 0 13 6 20 18 22-14-3-23 0-33 6z" stroke="#ddd" />
      </Glyph>
    </TaskItem>
    <TaskItem>
      <Glyph box="442 170 54 52">
        <path d="M469 176h25v40h-25z" fill="#fff" stroke="#2b5797" strokeWidth="2" />
        <path d="M474 184h16M474 191h16M474 198h16M474 205h16" stroke="#2b5797" />
        <path d="M445 177l30-5v48l-30-5z" fill="#2b5797" stroke="none" />
        <path d="M449 188l4 17 5-15 5 15 5-17" stroke="#fff" />
      </Glyph>
    </TaskItem>
    <TaskItem>
      <Glyph box="554 170 54 52">
        <path d="M581 177h25v38h-25z" fill="#fff" stroke="#1e7145" strokeWidth="2" />
        <path d="M584 186h20M584 196h20M584 206h20M596 178v36" stroke="#1e7145" />
        <path d="M557 177l30-5v48l-30-5z" fill="#1e7145" stroke="none" />
        <path d="M565 187l13 19M578 187l-13 19" stroke="#fff" strokeWidth="4" />
      </Glyph>
    </TaskItem>
    <TaskItem open>
      <Glyph box="666 168 54 54">
        <path d="M681 174l36 4-6 42-44-10z" fill="#8bbdc9" stroke="#d8e9ec" strokeWidth="2" />
        <path d="M681 174l36 4-1 8-38-5z" fill="#e3e7e5" stroke="none" />
        <path d="M667 210l15-24 11 30z" fill="#c9e1e5" stroke="none" />
        <path d="M717 178l-13 41 8 1z" fill="#638e91" stroke="none" />
      </Glyph>
    </TaskItem>
    <TaskItem>
      <Glyph box="777 168 56 56">
        <ellipse cx="801" cy="186" rx="19" ry="14" fill="#f1eee8" stroke="#bdbdbd" strokeWidth="2" />
        <path d="M786 183l26 17M798 176l-6 23" stroke="#c53b32" strokeWidth="4" />
        <path d="M795 202l18-5" stroke="#ccc" strokeWidth="4" />
        <circle cx="809" cy="213" r="6" stroke="#3677b8" strokeWidth="4" />
        <circle cx="823" cy="205" r="6" stroke="#3677b8" strokeWidth="4" />
      </Glyph>
    </TaskItem>

    <div className="flex-1" />
    <div className="-mt-px flex w-[180px]">
      <Glyph box="900 92 54 91">
        <path d="M915 144l12-12 12 12" stroke="#ddd" />
      </Glyph>
      <Glyph box="954 92 51 91">
        <path d="M967 130l8-6 7 6-7 6zM982 130l8-6 8 6-8 6zM967 141l8-5 7 6-7 5zM982 142l8-6 8 5-8 6z" fill="#eee" stroke="none" />
        <path d="M974 150l8-5 8 5-8 5z" fill="#eee" stroke="none" />
        <circle cx="991" cy="147" r="7" fill="#3b9e44" stroke="none" />
      </Glyph>
      <Glyph box="1005 92 60 91">
        <path d="M1021 131h30v16h-30zM1053 136v6" stroke="#eee" />
        <path d="M1025 134h10v10h-10z" fill="#eee" stroke="none" />
      </Glyph>
      <Glyph box="1065 92 51 91">
        <path d="M1082 149c-1-11 8-20 21-20M1089 150c-1-8 6-14 15-14M1096 151c0-5 4-8 9-8" stroke="#aaa" />
        <circle cx="1103" cy="149" r="3" fill="#eee" stroke="none" />
      </Glyph>
      <Glyph box="1116 92 57 91">
        <path d="M1129 134h5l9-8v24l-9-8h-5zM1149 133l10 9M1159 133l-10 9" stroke="#ddd" />
      </Glyph>
      <div className="flex w-[49px] flex-col items-center pt-[2px] text-[9.200px] leading-[13.500px] tracking-[-0.25px] text-[#eee]">
        <span>11:03 AM</span>
        <span>10/31/2016</span>
      </div>
      <Glyph box="1320 92 108 91">
        <path d="M1348 120h35v26h-21l-7 7v-7h-7z" fill="#fff" stroke="none" />
        <path d="M1353 128h25M1353 136h25" stroke="#555" />
        <circle cx="1381" cy="154" r="16" fill="#333" stroke="#999" />
        <path d="M1376 150c0-7 11-7 11-1 0 5-9 7-11 12h12" stroke="#eee" />
      </Glyph>
      <div className="w-px bg-[#666]" />
    </div>
  </footer>
);

const App: React.FC = () => (
  <div className="flex h-[821px] w-[1460px] flex-col overflow-hidden bg-black font-['Noto_Sans','Open_Sans',sans-serif]">
    <TitleBar />
    <MenuTabs />
    <Ribbon />
    <FileTabs />
    <Canvas />
    <StatusBar />
    <Taskbar />
  </div>
);

export default App;
